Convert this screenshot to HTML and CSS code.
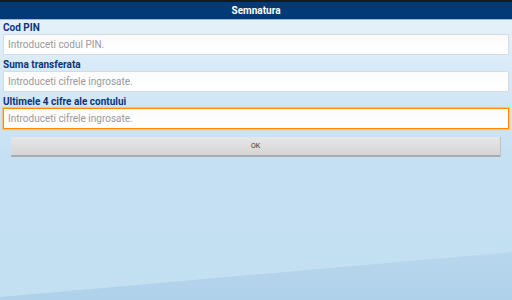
FILE: index.html
```html
<!DOCTYPE html>
<html>
<head>
    <title>Semnatura</title>
    <meta charset="UTF-8">
    <link rel="stylesheet" href="styles.css">
</head>
<body>
    <div class="titlebar">Semnatura</div>

    <form class="form">
        <label class="field-label" for="pin">Cod PIN</label>
        <input class="field" id="pin" type="text" placeholder="Introduceti codul PIN.">

        <label class="field-label" for="suma">Suma transferata</label>
        <input class="field" id="suma" type="text" placeholder="Introduceti cifrele ingrosate.">

        <label class="field-label" for="cont">Ultimele 4 cifre ale contului</label>
        <input class="field focused" id="cont" type="text" placeholder="Introduceti cifrele ingrosate.">

        <button class="ok-btn" type="button">OK</button>
    </form>

    <div class="wave"></div>
</body>
</html>
```

FILE: styles.css
```css
html, body {
    margin: 0;
    height: 100%;
}
body {
    position: relative;
    overflow: hidden;
    font-family: Roboto, "Liberation Sans", sans-serif;
    background: linear-gradient(to bottom, #e9f3fb 0px, #d6e9f6 80px, #c5e0f3 160px, #c3dff2 300px);
}

.titlebar {
    height: 17px;
    line-height: 17px;
    border-top: 2px solid #1a1a1a;
    border-bottom: 1px solid #9bb8d4;
    background: #023a77;
    color: #fff;
    font-size: 10px;
    font-weight: bold;
    text-align: center;
}

.form {
    display: flex;
    flex-direction: column;
    position: relative;
    z-index: 1;
}
.field-label {
    height: 13px;
    line-height: 12px;
    padding: 0 3px;
    margin-top: 3px;
    color: #0b3479;
    font-size: 10px;
    font-weight: bold;
    display: flex;
    align-items: flex-end;
}
.form .field-label:first-child {
    margin-top: 1px;
}
.field {
    box-sizing: border-box;
    height: 21px;
    margin: 0 3px;
    padding: 0 4px;
    border: 1px solid #d4dbe2;
    background: linear-gradient(to bottom, #fbfbfb, #ffffff);
    font-family: inherit;
    font-size: 10px;
    color: #333;
    outline: none;
}
.field::placeholder {
    color: #9a9a9a;
}
.field.focused {
    border: 1px solid #ff8a00;
    box-shadow: 0 0 1px 1px #ffc27a;
}

.ok-btn {
    box-sizing: border-box;
    height: 20px;
    margin: 8px 12px 0 11px;
    border: none;
    border-bottom: 2px solid #a9acae;
    box-shadow: 1px 0 0 #b9c2c9;
    background: linear-gradient(to bottom, #e7e7e7, #d5d5d5);
    font-family: inherit;
    font-size: 7px;
    color: #333;
}

.wave {
    position: absolute;
    left: 0;
    right: 0;
    bottom: 0;
    height: 48px;
    background: linear-gradient(to bottom, #b7d7ed, #afd1ea);
    clip-path: polygon(0 45px, 100% 0, 100% 100%, 0 100%);
}
```
